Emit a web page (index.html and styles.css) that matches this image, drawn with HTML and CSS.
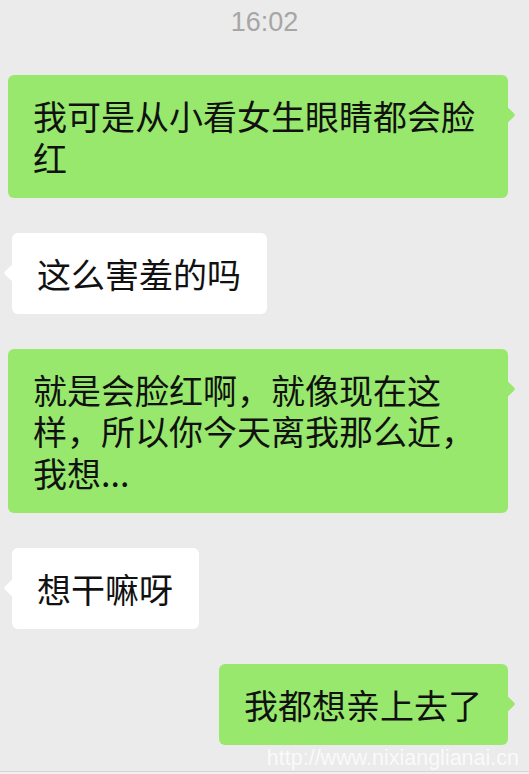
FILE: index.html
```html
<!DOCTYPE html>
<html>
<head>
    <meta charset="utf-8">
    <title>聊天记录</title>
    <link rel="stylesheet" href="styles.css">
</head>
<body>
    <div class="page">
        <div class="chat">
            <div class="time">16:02</div>
            <div class="msg me">我可是从小看女生眼睛都会脸红</div>
            <div class="msg them">这么害羞的吗</div>
            <div class="msg me">就是会脸红啊，就像现在这样，所以你今天离我那么近，我想...</div>
            <div class="msg them">想干嘛呀</div>
            <div class="msg me">我都想亲上去了</div>
        </div>
        <div class="footer"></div>
    </div>
    <div class="watermark">http://www.nixianglianai.cn</div>
</body>
</html>
```
FILE: styles.css
```css
body {
    margin: 0;
    background-color: #ebebeb;
    font-family: "Liberation Sans", "Noto Sans CJK SC", sans-serif;
    position: relative;
}
.page {
    display: flex;
    flex-direction: column;
    height: 100vh;
}
.chat {
    flex: 1;
    display: flex;
    flex-direction: column;
    gap: 35px;
    padding: 7px 21px 0 8px;
    overflow: hidden;
}
.time {
    text-align: center;
    font-size: 27px;
    line-height: 30px;
    color: #a6a6a6;
    margin-bottom: 3px;
    padding-left: 13px;
}
.msg {
    position: relative;
    max-width: 500px;
    box-sizing: border-box;
    padding: 20px 26px 19.5px 25px;
    border-radius: 6px;
    font-family: "Noto Sans CJK SC", sans-serif;
    font-size: 34px;
    line-height: 41.5px;
    color: #111;
}
.msg::before {
    content: "";
    position: absolute;
    top: 34px;
    width: 12px;
    height: 12px;
    border-radius: 2px;
    transform: rotate(45deg);
}
.msg.me {
    align-self: flex-end;
    background-color: #97e86c;
}
.msg.me::before {
    right: -5px;
    background-color: #97e86c;
}
.msg.them {
    align-self: flex-start;
    margin-left: 4px;
    background-color: #fff;
}
.msg.them::before {
    left: -6px;
    background-color: #fff;
}
.footer {
    height: 2px;
    border-top: 1px solid #d6d6d6;
    background-color: #f0f0f0;
}
.watermark {
    position: absolute;
    top: 746px;
    right: 10px;
    font-size: 21.5px;
    line-height: 24px;
    color: rgba(255, 255, 255, 0.75);
}
```
